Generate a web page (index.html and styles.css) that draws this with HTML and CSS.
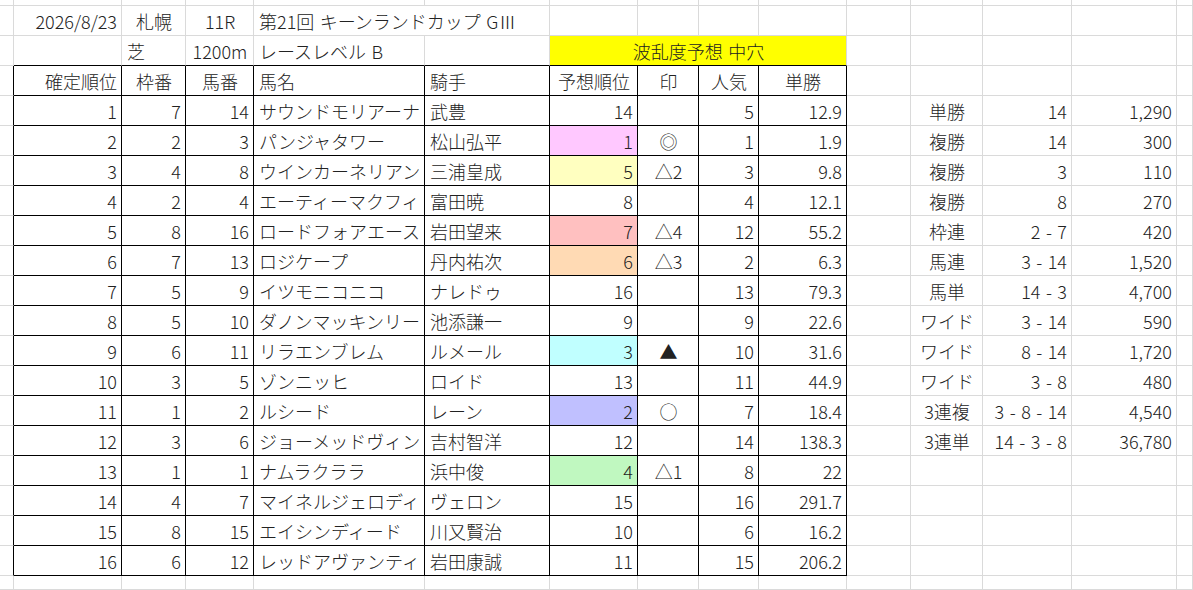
FILE: index.html
```html
<!DOCTYPE html>
<html lang="ja">
<head>
<meta charset="utf-8">
<title>キーンランドカップ 予想</title>
<link rel="stylesheet" href="styles.css">
</head>
<body>
<div class="sheet">
  <!-- row 0 (partial) -->
  <div class="c"></div><div class="c"></div><div class="c"></div><div class="c"></div><div class="c"></div><div class="c"></div><div class="c"></div><div class="c"></div><div class="c"></div><div class="c"></div><div class="c"></div><div class="c"></div><div class="c"></div><div class="c"></div><div class="c"></div>

  <!-- row 1 -->
  <div class="c"></div>
  <div class="c r">2026/8/23</div>
  <div class="c m">札幌</div>
  <div class="c m">11R</div>
  <div class="c span2 over">第21回 キーンランドカップ GⅢ</div>
  <div class="c"></div><div class="c"></div><div class="c"></div><div class="c"></div><div class="c"></div><div class="c"></div><div class="c"></div><div class="c"></div><div class="c"></div>

  <!-- row 2 -->
  <div class="c"></div>
  <div class="c tb"></div>
  <div class="c tb">芝</div>
  <div class="c tb m">1200m</div>
  <div class="c tb">レースレベル B</div>
  <div class="c tb"></div>
  <div class="c tb m span4 yellow">波乱度予想 中穴</div>
  <div class="c"></div><div class="c"></div><div class="c"></div><div class="c"></div><div class="c"></div>

  <!-- row 3 header -->
  <div class="c tl"></div>
  <div class="c t r">確定順位</div>
  <div class="c t m">枠番</div>
  <div class="c t m">馬番</div>
  <div class="c t">馬名</div>
  <div class="c t">騎手</div>
  <div class="c t m">予想順位</div>
  <div class="c t m">印</div>
  <div class="c t m">人気</div>
  <div class="c t m">単勝</div>
  <div class="c"></div><div class="c"></div><div class="c"></div><div class="c"></div><div class="c"></div>

  <!-- data rows -->
  <div class="c tl"></div>
  <div class="c t r">1</div><div class="c t r">7</div><div class="c t r">14</div>
  <div class="c t">サウンドモリアーナ</div><div class="c t">武豊</div>
  <div class="c t r">14</div><div class="c t m"></div><div class="c t r">5</div><div class="c t r">12.9</div>
  <div class="c"></div><div class="c m">単勝</div><div class="c r">14</div><div class="c r">1,290</div><div class="c"></div>

  <div class="c tl"></div>
  <div class="c t r">2</div><div class="c t r">2</div><div class="c t r">3</div>
  <div class="c t">パンジャタワー</div><div class="c t">松山弘平</div>
  <div class="c t r p1">1</div><div class="c t m">◎</div><div class="c t r">1</div><div class="c t r">1.9</div>
  <div class="c"></div><div class="c m">複勝</div><div class="c r">14</div><div class="c r">300</div><div class="c"></div>

  <div class="c tl"></div>
  <div class="c t r">3</div><div class="c t r">4</div><div class="c t r">8</div>
  <div class="c t">ウインカーネリアン</div><div class="c t">三浦皇成</div>
  <div class="c t r p5">5</div><div class="c t m">△2</div><div class="c t r">3</div><div class="c t r">9.8</div>
  <div class="c"></div><div class="c m">複勝</div><div class="c r">3</div><div class="c r">110</div><div class="c"></div>

  <div class="c tl"></div>
  <div class="c t r">4</div><div class="c t r">2</div><div class="c t r">4</div>
  <div class="c t">エーティーマクフィ</div><div class="c t">富田暁</div>
  <div class="c t r">8</div><div class="c t m"></div><div class="c t r">4</div><div class="c t r">12.1</div>
  <div class="c"></div><div class="c m">複勝</div><div class="c r">8</div><div class="c r">270</div><div class="c"></div>

  <div class="c tl"></div>
  <div class="c t r">5</div><div class="c t r">8</div><div class="c t r">16</div>
  <div class="c t">ロードフォアエース</div><div class="c t">岩田望来</div>
  <div class="c t r p7">7</div><div class="c t m">△4</div><div class="c t r">12</div><div class="c t r">55.2</div>
  <div class="c"></div><div class="c m">枠連</div><div class="c r">2 - 7</div><div class="c r">420</div><div class="c"></div>

  <div class="c tl"></div>
  <div class="c t r">6</div><div class="c t r">7</div><div class="c t r">13</div>
  <div class="c t">ロジケープ</div><div class="c t">丹内祐次</div>
  <div class="c t r p6">6</div><div class="c t m">△3</div><div class="c t r">2</div><div class="c t r">6.3</div>
  <div class="c"></div><div class="c m">馬連</div><div class="c r">3 - 14</div><div class="c r">1,520</div><div class="c"></div>

  <div class="c tl"></div>
  <div class="c t r">7</div><div class="c t r">5</div><div class="c t r">9</div>
  <div class="c t">イツモニコニコ</div><div class="c t">ナレドゥ</div>
  <div class="c t r">16</div><div class="c t m"></div><div class="c t r">13</div><div class="c t r">79.3</div>
  <div class="c"></div><div class="c m">馬単</div><div class="c r">14 - 3</div><div class="c r">4,700</div><div class="c"></div>

  <div class="c tl"></div>
  <div class="c t r">8</div><div class="c t r">5</div><div class="c t r">10</div>
  <div class="c t">ダノンマッキンリー</div><div class="c t">池添謙一</div>
  <div class="c t r">9</div><div class="c t m"></div><div class="c t r">9</div><div class="c t r">22.6</div>
  <div class="c"></div><div class="c m">ワイド</div><div class="c r">3 - 14</div><div class="c r">590</div><div class="c"></div>

  <div class="c tl"></div>
  <div class="c t r">9</div><div class="c t r">6</div><div class="c t r">11</div>
  <div class="c t">リラエンブレム</div><div class="c t">ルメール</div>
  <div class="c t r p3">3</div><div class="c t m">▲</div><div class="c t r">10</div><div class="c t r">31.6</div>
  <div class="c"></div><div class="c m">ワイド</div><div class="c r">8 - 14</div><div class="c r">1,720</div><div class="c"></div>

  <div class="c tl"></div>
  <div class="c t r">10</div><div class="c t r">3</div><div class="c t r">5</div>
  <div class="c t">ゾンニッヒ</div><div class="c t">ロイド</div>
  <div class="c t r">13</div><div class="c t m"></div><div class="c t r">11</div><div class="c t r">44.9</div>
  <div class="c"></div><div class="c m">ワイド</div><div class="c r">3 - 8</div><div class="c r">480</div><div class="c"></div>

  <div class="c tl"></div>
  <div class="c t r">11</div><div class="c t r">1</div><div class="c t r">2</div>
  <div class="c t">ルシード</div><div class="c t">レーン</div>
  <div class="c t r p2">2</div><div class="c t m">○</div><div class="c t r">7</div><div class="c t r">18.4</div>
  <div class="c"></div><div class="c m">3連複</div><div class="c r">3 - 8 - 14</div><div class="c r">4,540</div><div class="c"></div>

  <div class="c tl"></div>
  <div class="c t r">12</div><div class="c t r">3</div><div class="c t r">6</div>
  <div class="c t">ジョーメッドヴィン</div><div class="c t">吉村智洋</div>
  <div class="c t r">12</div><div class="c t m"></div><div class="c t r">14</div><div class="c t r">138.3</div>
  <div class="c"></div><div class="c m">3連単</div><div class="c r">14 - 3 - 8</div><div class="c r">36,780</div><div class="c"></div>

  <div class="c tl"></div>
  <div class="c t r">13</div><div class="c t r">1</div><div class="c t r">1</div>
  <div class="c t">ナムラクララ</div><div class="c t">浜中俊</div>
  <div class="c t r p4">4</div><div class="c t m">△1</div><div class="c t r">8</div><div class="c t r">22</div>
  <div class="c"></div><div class="c"></div><div class="c"></div><div class="c"></div><div class="c"></div>

  <div class="c tl"></div>
  <div class="c t r">14</div><div class="c t r">4</div><div class="c t r">7</div>
  <div class="c t">マイネルジェロディ</div><div class="c t">ヴェロン</div>
  <div class="c t r">15</div><div class="c t m"></div><div class="c t r">16</div><div class="c t r">291.7</div>
  <div class="c"></div><div class="c"></div><div class="c"></div><div class="c"></div><div class="c"></div>

  <div class="c tl"></div>
  <div class="c t r">15</div><div class="c t r">8</div><div class="c t r">15</div>
  <div class="c t">エイシンディード</div><div class="c t">川又賢治</div>
  <div class="c t r">10</div><div class="c t m"></div><div class="c t r">6</div><div class="c t r">16.2</div>
  <div class="c"></div><div class="c"></div><div class="c"></div><div class="c"></div><div class="c"></div>

  <div class="c tl"></div>
  <div class="c t r">16</div><div class="c t r">6</div><div class="c t r">12</div>
  <div class="c t">レッドアヴァンティ</div><div class="c t">岩田康誠</div>
  <div class="c t r">11</div><div class="c t m"></div><div class="c t r">15</div><div class="c t r">206.2</div>
  <div class="c"></div><div class="c"></div><div class="c"></div><div class="c"></div><div class="c"></div>

  <!-- last partial row -->
  <div class="c"></div><div class="c"></div><div class="c"></div><div class="c"></div><div class="c"></div><div class="c"></div><div class="c"></div><div class="c"></div><div class="c"></div><div class="c"></div><div class="c"></div><div class="c"></div><div class="c"></div><div class="c"></div><div class="c"></div>
</div>
</body>
</html>
```
FILE: styles.css
```css
html, body {
  margin: 0;
  padding: 0;
  background: #ffffff;
}
body {
  width: 1193px;
  height: 590px;
  overflow: hidden;
  font-family: "Noto Sans CJK JP", "Noto Sans", sans-serif;
  font-size: 18px;
  font-weight: 300;
  color: #222222;
  word-spacing: 1.5px;
}
.sheet {
  display: grid;
  grid-template-columns: 14px 108px 64px 68px 171px 125px 88px 61px 60px 88px 64px 72px 89px 105px 16px;
  grid-template-rows: 6px repeat(19, 30px) 14px;
  width: 1193px;
  height: 590px;
}
.c {
  box-sizing: border-box;
  border-right: 1px solid #dadada;
  border-bottom: 1px solid #dadada;
  display: flex;
  align-items: center;
  justify-content: flex-start;
  padding: 0 4px 0 5px;
  white-space: nowrap;
  overflow: hidden;
  line-height: 1;
}
.r { justify-content: flex-end; }
.m { justify-content: center; }
.span2 { grid-column: span 2; }
.span4 { grid-column: span 4; }
.over { overflow: visible; }
.t { border-right-color: #000000; border-bottom-color: #000000; }
.tl { border-right-color: #000000; }
.tb { border-bottom-color: #000000; }
.yellow { background: #ffff00; }
.p1 { background: #ffc8ff; }
.p2 { background: #c0c0ff; }
.p3 { background: #c0ffff; }
.p4 { background: #c0f8c0; }
.p5 { background: #ffffc0; }
.p6 { background: #ffdab4; }
.p7 { background: #ffc0c0; }
```
